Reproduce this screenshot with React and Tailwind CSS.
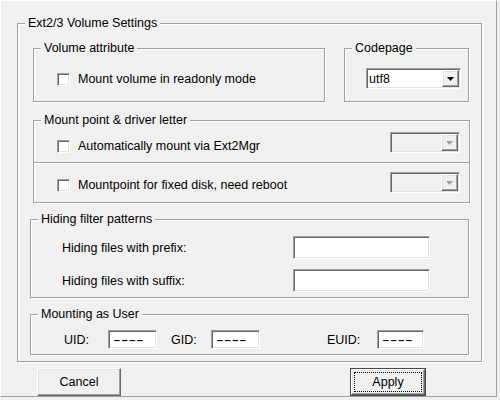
import React from "react";

const sunken =
  "border border-t-[#a0a0a0] border-l-[#a0a0a0] border-r-white border-b-white shadow-[inset_1px_1px_0_#696969,inset_-1px_-1px_0_#e3e3e3]";
const raised =
  "border border-t-white border-l-white border-r-[#696969] border-b-[#696969] shadow-[inset_-1px_-1px_0_#a0a0a0,inset_1px_1px_0_#e3e3e3]";

function Group({ title, className = "", children }) {
  return (
    <div
      className={
        "relative border border-[#a0a0a0] shadow-[inset_1px_1px_0_#fff,1px_1px_0_#fff] " +
        className
      }
    >
      <span className="absolute left-[7px] top-[-8px] px-[3px] leading-[14px] bg-[#f0f0f0] whitespace-nowrap">
        {title}
      </span>
      {children}
    </div>
  );
}

function Check() {
  return <div className={"w-[13px] h-[13px] bg-white shrink-0 " + sunken} />;
}

function Arrow({ color }) {
  return (
    <svg width="7" height="4" viewBox="0 0 7 4">
      <path d="M0 0H7L3.5 4Z" fill={color} />
    </svg>
  );
}

function Combo({ disabled, value, className = "" }) {
  return (
    <div
      className={
        "flex items-stretch " +
        (disabled ? "bg-[#f0f0f0] " : "bg-white ") +
        sunken +
        " " +
        className
      }
    >
      <div className="flex-1 pl-[2px] flex items-center leading-[14px]">{value}</div>
      <div
        className={
          "w-[17px] m-[1px] bg-[#f0f0f0] flex items-center justify-center " + raised
        }
      >
        <Arrow color={disabled ? "#a0a0a0" : "#000"} />
      </div>
    </div>
  );
}

function TextBox({ className = "", value = "" }) {
  return (
    <div className={"bg-white flex items-center pl-[4px] leading-[14px] " + sunken + " " + className}>
      <span className="inline-block origin-left scale-x-[1.85]">{value}</span>
    </div>
  );
}

export default function App() {
  return (
    <div className="w-[500px] h-[400px] bg-[#f0f0f0] font-['Liberation_Sans',Arial,sans-serif] text-[12.5px] text-black">
      <div className="w-[497px] h-[397px] border border-t-white border-l-white border-r-[#a0a0a0] border-b-[#a0a0a0] flex flex-col">
        <Group
          title="Ext2/3 Volume Settings"
          className="ml-[16px] mt-[22px] w-[465px] h-[339px] flex flex-col"
        >
          <div className="flex mt-[24px]">
            <Group title="Volume attribute" className="ml-[15px] w-[292px] h-[54px]">
              <div className="flex items-center pl-[23px] pt-[23px] gap-[8px]">
                <Check />
                <span className="leading-[14px]">Mount volume in readonly mode</span>
              </div>
            </Group>
            <Group title="Codepage" className="ml-[19px] w-[125px] h-[54px]">
              <Combo value="utf8" className="ml-[21px] mt-[19px] w-[95px] h-[21px]" />
            </Group>
          </div>

          <Group
            title="Mount point & driver letter"
            className="ml-[15px] mt-[18px] w-[437px] h-[83px] flex flex-col"
          >
            <div className="h-[41px] flex items-start pl-[23px] pr-[9px] pt-[11px]">
              <div className="flex items-center gap-[8px] mt-[7px]">
                <Check />
                <span className="leading-[14px]">Automatically mount via Ext2Mgr</span>
              </div>
              <Combo disabled className="ml-auto w-[70px] h-[21px]" />
            </div>
            <div className="h-[2px] border-t border-[#a0a0a0] bg-white" />
            <div className="h-[38px] flex items-start pl-[23px] pr-[9px] pt-[8px]">
              <div className="flex items-center gap-[8px] mt-[6px]">
                <Check />
                <span className="leading-[14px]">Mountpoint for fixed disk, need reboot</span>
              </div>
              <Combo disabled className="ml-auto w-[70px] h-[21px]" />
            </div>
          </Group>

          <Group
            title="Hiding filter patterns"
            className="ml-[12px] mt-[16px] w-[439px] h-[79px] flex flex-col pl-[31px] pt-[16px] gap-[10px]"
          >
            <div className="flex items-center">
              <span className="w-[231px] leading-[14px]">Hiding files with prefix:</span>
              <TextBox className="w-[137px] h-[23px]" />
            </div>
            <div className="flex items-center">
              <span className="w-[231px] leading-[14px]">Hiding files with suffix:</span>
              <TextBox className="w-[137px] h-[23px]" />
            </div>
          </Group>

          <Group
            title="Mounting as User"
            className="ml-[12px] mt-[16px] w-[439px] h-[41px] flex items-start pl-[33px] pt-[15px]"
          >
            <div className="flex items-center">
              <span className="w-[44px] leading-[14px]">UID:</span>
              <TextBox value="----" className="w-[49px] h-[19px]" />
              <span className="ml-[14px] w-[40px] leading-[14px]">GID:</span>
              <TextBox value="----" className="w-[49px] h-[19px]" />
              <span className="ml-[67px] w-[50px] leading-[14px]">EUID:</span>
              <TextBox value="----" className="w-[47px] h-[19px]" />
            </div>
          </Group>
        </Group>

        <div className="flex mt-[6px] ml-[36px]">
          <button
            className={
              "w-[84px] h-[28px] bg-[#f0f0f0] flex items-center justify-center leading-[14px] " +
              raised
            }
          >
            Cancel
          </button>
          <button className="ml-[229px] w-[76px] h-[28px] border border-[#464646] bg-[#f0f0f0] flex">
            <div
              className={
                "flex-1 flex items-center justify-center p-[2px] " + raised
              }
            >
              <div className="w-full h-full border border-dotted border-[#000] flex items-center justify-center leading-[14px]">
                Apply
              </div>
            </div>
          </button>
        </div>
      </div>
    </div>
  );
}
